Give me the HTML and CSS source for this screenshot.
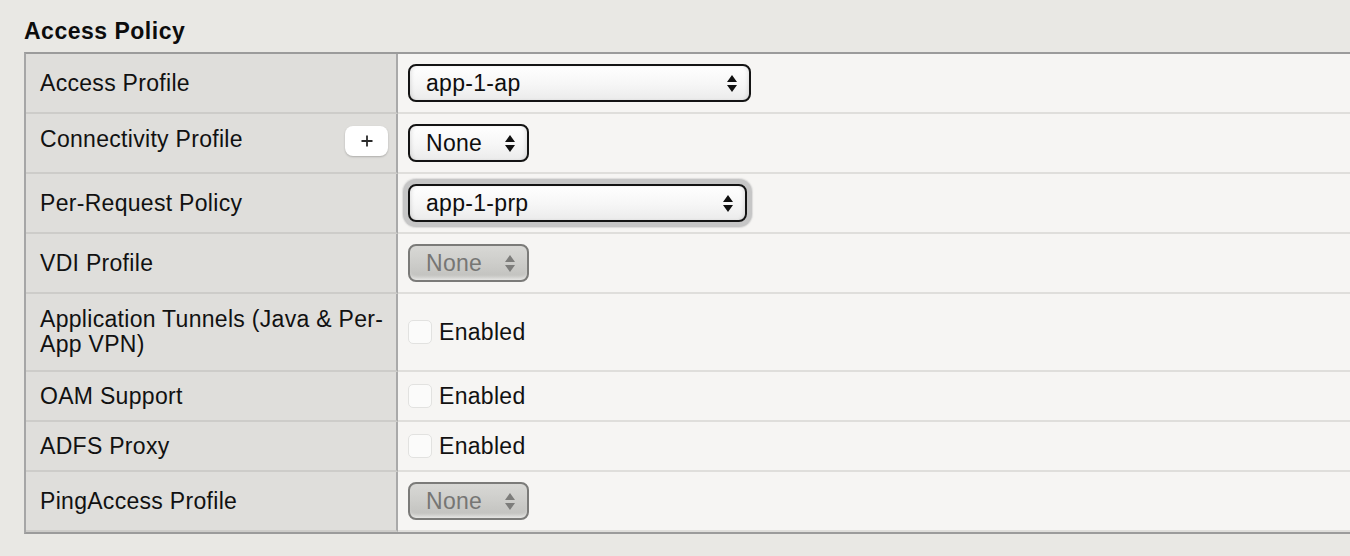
FILE: index.html
```html
<!DOCTYPE html>
<html lang="en">
<head>
<meta charset="utf-8">
<title>Access Policy</title>
<link rel="stylesheet" href="styles.css">
</head>
<body>
<div class="page">
  <h2 class="section-title">Access Policy</h2>
  <div class="props">
    <div class="row">
      <div class="label"><span class="label-text">Access Profile</span></div>
      <div class="value">
        <div class="select select-wide"><span class="select-text">app-1-ap</span>
          <svg class="arrows" width="10" height="17" viewBox="0 0 10 17"><path d="M0 7 L5 0 L10 7 Z M0 10 L10 10 L5 17 Z"/></svg>
        </div>
      </div>
    </div>
    <div class="row">
      <div class="label label-split"><span class="label-text label-raised">Connectivity Profile</span>
        <span class="add-btn"><svg width="12" height="12" viewBox="0 0 12 12"><path d="M6 0.5 V11.5 M0.5 6 H11.5" stroke="#2b2b2b" stroke-width="1.8" fill="none"/></svg></span>
      </div>
      <div class="value">
        <div class="select"><span class="select-text">None</span>
          <svg class="arrows" width="10" height="17" viewBox="0 0 10 17"><path d="M0 7 L5 0 L10 7 Z M0 10 L10 10 L5 17 Z"/></svg>
        </div>
      </div>
    </div>
    <div class="row">
      <div class="label"><span class="label-text">Per-Request Policy</span></div>
      <div class="value">
        <div class="select select-wide select-focus"><span class="select-text">app-1-prp</span>
          <svg class="arrows" width="10" height="17" viewBox="0 0 10 17"><path d="M0 7 L5 0 L10 7 Z M0 10 L10 10 L5 17 Z"/></svg>
        </div>
      </div>
    </div>
    <div class="row">
      <div class="label"><span class="label-text">VDI Profile</span></div>
      <div class="value">
        <div class="select select-disabled"><span class="select-text">None</span>
          <svg class="arrows" width="10" height="17" viewBox="0 0 10 17"><path d="M0 7 L5 0 L10 7 Z M0 10 L10 10 L5 17 Z"/></svg>
        </div>
      </div>
    </div>
    <div class="row row-tall">
      <div class="label"><span class="label-text">Application Tunnels (Java &amp; Per-<br>App VPN)</span></div>
      <div class="value"><span class="checkbox"></span><span class="check-label">Enabled</span></div>
    </div>
    <div class="row row-compact">
      <div class="label"><span class="label-text">OAM Support</span></div>
      <div class="value"><span class="checkbox"></span><span class="check-label">Enabled</span></div>
    </div>
    <div class="row row-compact">
      <div class="label"><span class="label-text">ADFS Proxy</span></div>
      <div class="value"><span class="checkbox"></span><span class="check-label">Enabled</span></div>
    </div>
    <div class="row">
      <div class="label"><span class="label-text">PingAccess Profile</span></div>
      <div class="value">
        <div class="select select-disabled"><span class="select-text">None</span>
          <svg class="arrows" width="10" height="17" viewBox="0 0 10 17"><path d="M0 7 L5 0 L10 7 Z M0 10 L10 10 L5 17 Z"/></svg>
        </div>
      </div>
    </div>
  </div>
</div>
</body>
</html>
```
FILE: styles.css
```css
html, body {
  margin: 0;
  padding: 0;
  background: #e9e8e4;
  overflow: hidden;
}

body {
  font-family: "Liberation Sans", Helvetica, Arial, sans-serif;
  font-size: 23px;
  letter-spacing: 0.3px;
  color: #111;
}

.page {
  padding: 18px 0 0 24px;
}

.section-title {
  margin: 0 0 8px 0;
  font-size: 23px;
  line-height: 26px;
  font-weight: bold;
  letter-spacing: 0.5px;
  color: #0c0c0c;
}

.props {
  width: 1340px;
  border-top: 2px solid #9b9b9b;
  border-left: 2px solid #a6a6a6;
  border-bottom: 2px solid #9b9b9b;
}

.row {
  display: grid;
  grid-template-columns: 372px 1fr;
  min-height: 60px;
}

.row-compact {
  min-height: 50px;
}

.row-tall {
  min-height: 78px;
}

.label {
  box-sizing: border-box;
  background: #dfdedb;
  border-right: 2px solid #a9a9a9;
  border-bottom: 2px solid #cdccc9;
  padding: 0 8px 0 14px;
  display: flex;
  align-items: center;
  line-height: 25px;
}

.label-split {
  justify-content: space-between;
}

.label-raised {
  margin-bottom: 8px;
}

.value {
  box-sizing: border-box;
  background: #f6f5f3;
  border-bottom: 2px solid #dfdedb;
  padding: 0 10px;
  display: flex;
  align-items: center;
}

.add-btn {
  width: 43px;
  height: 30px;
  margin-bottom: 4px;
  background: #ffffff;
  border-radius: 8px;
  box-shadow: 0 1px 2px rgba(0, 0, 0, 0.22);
  display: flex;
  align-items: center;
  justify-content: center;
}

.select {
  box-sizing: border-box;
  height: 38px;
  display: inline-flex;
  align-items: center;
  gap: 23px;
  padding: 0 12px 0 16px;
  border: 2px solid #141414;
  border-radius: 8px;
  background: linear-gradient(to bottom, #ffffff 0%, #f6f6f6 55%, #ebebeb 100%);
  box-shadow: inset 3px 0 4px -2px rgba(0, 0, 0, 0.12), inset -3px 0 4px -2px rgba(0, 0, 0, 0.12);
  color: #0e0e0e;
}

.select-text {
  flex: 1;
  line-height: 26px;
}

.arrows {
  fill: #111;
  flex: none;
}

.select-wide {
  width: 343px;
}

.select-focus {
  width: 339px;
  box-shadow: 0 0 0 5px #c6c6c6, 0 0 1px 6px rgba(198, 198, 198, 0.5), inset 3px 0 4px -2px rgba(0, 0, 0, 0.12), inset -3px 0 4px -2px rgba(0, 0, 0, 0.12);
}

.select-disabled {
  border-color: #7b7b79;
  background: linear-gradient(to bottom, #d8d8d5 0%, #cdcdca 50%, #c4c4c1 85%, #d3d3d0 100%);
  box-shadow: inset 0 -4px 4px -3px rgba(255, 255, 255, 0.6);
  color: #767674;
}

.select-disabled .arrows {
  fill: #7d7d7b;
}

.checkbox {
  box-sizing: border-box;
  width: 24px;
  height: 24px;
  border: 1px solid #e2e2e0;
  border-radius: 5px;
  background: #fbfbfa;
  margin-right: 7px;
  flex: none;
}

.check-label {
  line-height: 26px;
}
```
